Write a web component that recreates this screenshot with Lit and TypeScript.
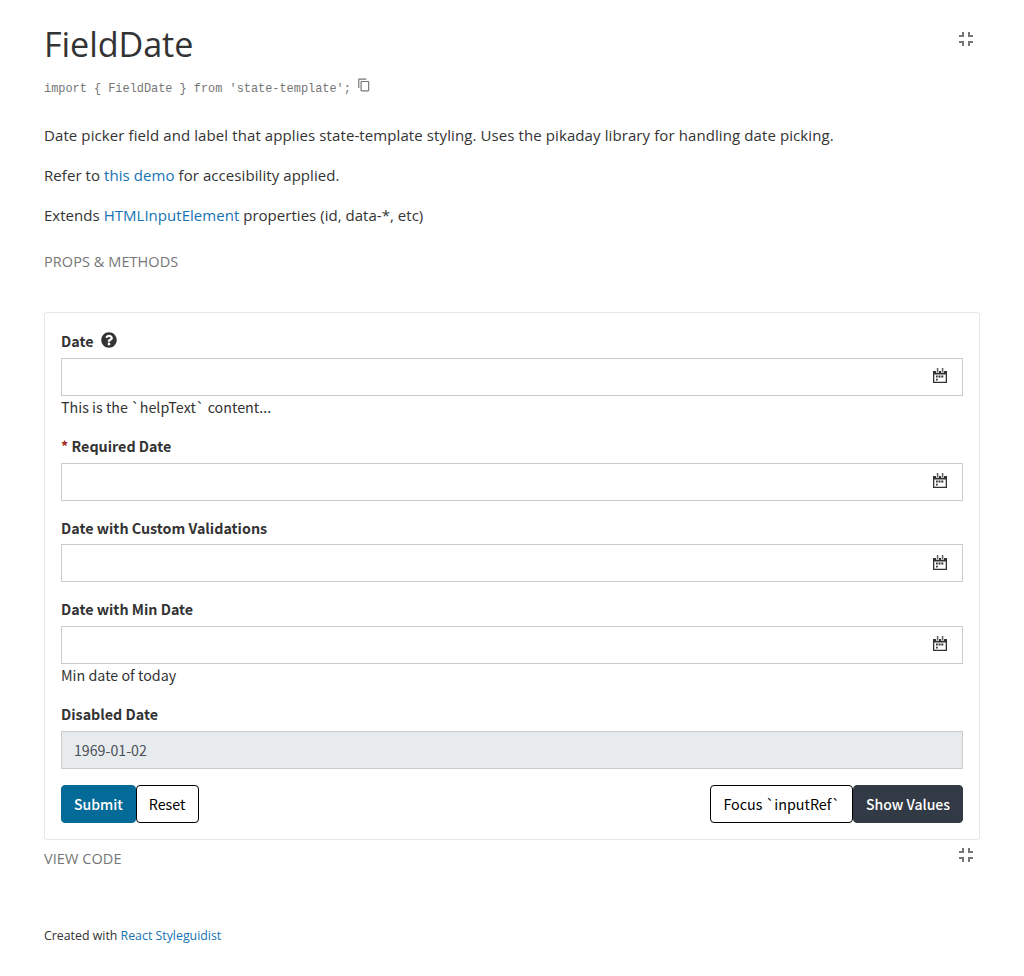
import { LitElement, html, css } from "lit";
import { customElement } from "lit/decorators.js";

const collapse = html`<svg class="collapse" width="24" height="24" viewBox="0 0 24 24" fill="currentColor"><path d="M5 16h3v3h2v-5H5v2zm3-8H5v2h5V5H8v3zm6 11h2v-3h3v-2h-5v5zm2-11V5h-2v5h5V8h-3z"/></svg>`;
const copy = html`<svg class="copy" width="14" height="14" viewBox="0 0 24 24" fill="currentColor"><path d="M16 1H4c-1.100 0-2 .9-2 2v14h2V3h12V1zm3 4H8c-1.100 0-2 .9-2 2v14c0 1.100.9 2 2 2h11c1.100 0 2-.9 2-2V7c0-1.100-.9-2-2-2zm0 16H8V7h11v14z"/></svg>`;
const calendar = html`<svg class="cal" width="14" height="15" viewBox="0 0 14 15" fill="#333"><path fill-rule="evenodd" d="M0 3h14v12H0zM1.300 6.400v7.300h11.400V6.400z"/><path fill="#fff" d="M3 2h3v2.800H3zM8 2h3v2.800H8z"/><path fill="#666" d="M3.800 0h1.600v4.200H3.800zM8.800 0h1.600v4.200H8.800z"/><path d="M3 7.500h1.700v2H3zM5.500 7.500h2v2h-2zM8.300 7.500h2v2h-2zM3 10.700h1.700v1.800H3z"/></svg>`;
const help = html`<svg class="help" width="16" height="16" viewBox="0 0 512 512" fill="#333"><path d="M504 256c0 137-111 248-248 248S8 393 8 256 119 8 256 8s248 111 248 248zM262.700 90c-54.500 0-89.200 23-116.500 63.800-3.500 5.300-2.400 12.400 2.700 16.200l34.700 26.300c5.200 3.900 12.600 3 16.700-2.100 17.900-22.700 30.100-35.800 57.300-35.800 20.400 0 45.700 13.100 45.700 33 0 15-12.400 22.700-32.500 34C247.100 238.500 216 254.900 216 296v4c0 6.600 5.400 12 12 12h56c6.600 0 12-5.400 12-12v-1.300c0-28.500 83.200-29.600 83.200-106.700 0-58-60.200-102-116.500-102zM256 338c-25.400 0-46 20.600-46 46s20.600 46 46 46 46-20.600 46-46-20.600-46-46-46z"/></svg>`;

@customElement("app-root")
export class AppRoot extends LitElement {
  static styles = css`
    :host { display: block; box-sizing: border-box; height: 976px; padding: 16px 44px; background: #fff; color: #333; font: 15px/24px "Open Sans", sans-serif; }
    a { color: #1673b1; text-decoration: none; }
    .head { display: flex; justify-content: space-between; height: 56px; color: #767676; }
    h1 { margin: 0; color: #333; font-size: 34.200px; line-height: 56px; font-weight: 400; letter-spacing: -0.1px; }
    .head .collapse { margin: 11px 2px 0 0; }
    .path { display: flex; height: 32px; align-items: center; color: #767676; font: 11.900px/20px "Liberation Mono", monospace; white-space: pre; }
    .path span { padding-top: 2px; }
    .copy { margin: -6px 0 0 6px; }
    .intro { padding-top: 19px; letter-spacing: 0.097px; }
    .intro .short { letter-spacing: 0.070px; }
    .intro .tight { letter-spacing: 0.030px; }
    p { margin: 0 0 16px; }
    .section { color: #767676; font-size: 14.500px; line-height: 24px; letter-spacing: 0.070px; text-transform: uppercase; }
    .props { margin-top: 23px; }
    .card { box-sizing: border-box; height: 528px; margin-top: 38px; padding: 16px; border: 1px solid #e8e8e8; border-radius: 3px; font: 14.300px/24px "Noto Sans CJK SC", sans-serif; }
    .field { margin-bottom: 14.750px; }
    .last { margin-bottom: 16px; }
    .label { display: flex; height: 23.700px; margin-bottom: 5px; font-weight: 700; white-space: pre; }
    .star { color: #a12b1f; }
    .help { margin: 3px 0 0 8px; }
    .input { box-sizing: border-box; display: flex; justify-content: space-between; align-items: center; height: 38px; padding: 0 15px 0 12px; border: 1px solid #ccc; }
    .cal { margin: -2px 0 0 auto; }
    .disabled { background: #e7ebee; color: #495057; font-size: 14.200px; }
    .note { height: 23.700px; line-height: 22.500px; }
    .row { display: flex; justify-content: space-between; }
    .group { display: flex; }
    .btn { box-sizing: border-box; height: 38px; padding: 0 12px; border: 1px solid #000; border-radius: 4px; background: #fff; color: #000; font: inherit; line-height: 36px; white-space: nowrap; }
    .reset { padding: 0 12.400px 0 12px; }
    .primary { background: #046b99; border-color: #046b99; color: #fff; font-size: 14px; font-weight: 500; }
    .dark { background: #323a45; border-color: #323a45; color: #fff; font-size: 14px; font-weight: 500; }
    .foot { display: flex; justify-content: space-between; height: 36px; color: #767676; }
    .foot .section { margin-top: 7px; }
    .foot .collapse { margin: 3px 2px 0 0; }
    footer { margin-top: 48px; font-size: 12.350px; line-height: 24px; }
  `;
  field(label: unknown, note = "") {
    return html`<div class="field"><div class="label">${label}</div><div class="input">${calendar}</div>${note ? html`<div class="note">${note}</div>` : ""}</div>`;
  }
  render() {
    return html`
      <div class="head"><h1>FieldDate</h1>${collapse}</div>
      <div class="path"><span>import { FieldDate } from 'state-template';</span>${copy}</div>
      <div class="intro">
        <p>Date picker field and label that applies state-template styling. Uses the pikaday library for handling date picking.</p>
        <p class="short">Refer to <a>this demo</a> for accesibility applied.</p>
        <p class="tight">Extends <a>HTMLInputElement</a> properties (id, data-*, etc)</p>
      </div>
      <div class="section props">Props &amp; methods</div>
      <div class="card">
        ${this.field(html`<span>Date</span>${help}`, "This is the `helpText` content...")}
        ${this.field(html`<span><span class="star">*</span> Required Date</span>`)}
        ${this.field(html`<span>Date with Custom Validations</span>`)}
        ${this.field(html`<span>Date with Min Date</span>`, "Min date of today")}
        <div class="field last"><div class="label">Disabled Date</div><div class="input disabled">1969-01-02</div></div>
        <div class="row"><div class="group"><button class="btn primary">Submit</button><button class="btn reset">Reset</button></div>
        <div class="group"><button class="btn">Focus \`inputRef\`</button><button class="btn dark">Show Values</button></div></div>
      </div>
      <div class="foot"><div class="section">View code</div>${collapse}</div>
      <footer>Created with <a>React Styleguidist</a></footer>`;
  }
}
